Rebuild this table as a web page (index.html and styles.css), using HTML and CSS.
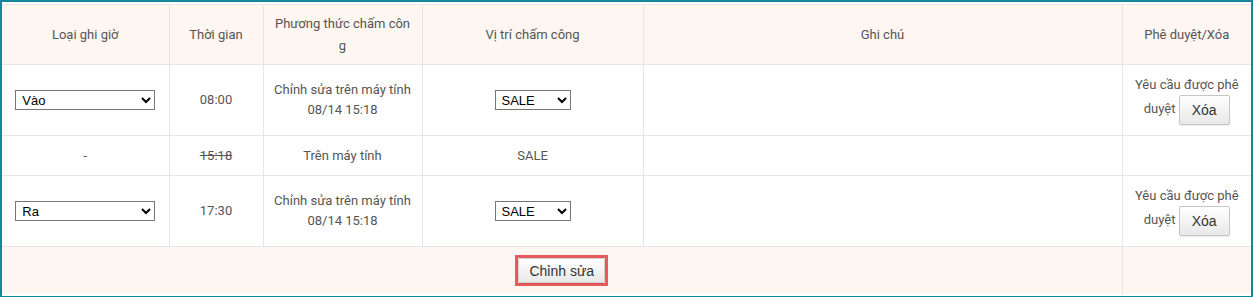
FILE: index.html
```html
<!DOCTYPE html>
<html lang="vi">
<head>
<meta charset="utf-8">
<link rel="stylesheet" href="styles.css">
</head>
<body>
<div class="frame">
  <table class="grid">
    <colgroup>
      <col class="c1"><col class="c2"><col class="c3"><col class="c4"><col class="c5"><col class="c6">
    </colgroup>
    <thead>
      <tr class="head">
        <th>Loại ghi giờ</th>
        <th>Thời gian</th>
        <th class="brk">Phương thức chấm công</th>
        <th>Vị trí chấm công</th>
        <th>Ghi chú</th>
        <th>Phê duyệt/Xóa</th>
      </tr>
    </thead>
    <tbody>
      <tr class="tall">
        <td><select class="sel sel-type"><option>Vào</option><option>Ra</option></select></td>
        <td>08:00</td>
        <td>Chỉnh sửa trên máy tính<br>08/14 15:18</td>
        <td><select class="sel sel-loc"><option>SALE</option></select></td>
        <td></td>
        <td><span class="req">Yêu cầu được phê</span> <span class="req">duyệt</span> <button class="btn btn-del">Xóa</button></td>
      </tr>
      <tr class="short">
        <td>-</td>
        <td><s>15:18</s></td>
        <td>Trên máy tính</td>
        <td>SALE</td>
        <td></td>
        <td></td>
      </tr>
      <tr class="tall">
        <td><select class="sel sel-type"><option>Ra</option><option>Vào</option></select></td>
        <td>17:30</td>
        <td>Chỉnh sửa trên máy tính<br>08/14 15:18</td>
        <td><select class="sel sel-loc"><option>SALE</option></select></td>
        <td></td>
        <td><span class="req">Yêu cầu được phê</span> <span class="req">duyệt</span> <button class="btn btn-del">Xóa</button></td>
      </tr>
    </tbody>
    <tfoot>
      <tr class="foot">
        <td colspan="5"><span class="highlight"><button class="btn btn-edit">Chỉnh sửa</button></span></td>
        <td></td>
      </tr>
    </tfoot>
  </table>
</div>
</body>
</html>
```
FILE: styles.css
```css
html, body {
  margin: 0;
  padding: 0;
  background: #ffffff;
}
.frame {
  width: 1249px;
  height: 292px;
  border: 2px solid #11899b;
  border-bottom-width: 3px;
  padding-top: 2px;
  background: #ffffff;
  overflow: hidden;
}
.grid {
  width: 1249px;
  table-layout: fixed;
  border-collapse: collapse;
  font-family: Roboto, "Liberation Sans", sans-serif;
  font-size: 13px;
  color: #555555;
  line-height: 20px;
}
.c1 { width: 167px; }
.c2 { width: 94px; }
.c3 { width: 159px; }
.c4 { width: 221px; }
.c5 { width: 479px; }
.c6 { width: 129px; }
.grid th, .grid td {
  border: 1px solid #e6e6e6;
  text-align: center;
  vertical-align: middle;
  padding: 0 8px;
}
.grid tr > :first-child { border-left: none; }
.grid tr > :last-child { border-right: none; }
.grid tfoot td { border-bottom: none; }
.grid th {
  font-weight: normal;
  background: #fef6f0;
  line-height: 22px;
}
.brk { word-break: break-all; }
.head th { height: 59px; }
.tall td { height: 70px; }
.short td { height: 39px; }
.foot td { height: 47px; background: #fef6f0; }
s { text-decoration: line-through; }
.sel {
  font-family: "Liberation Sans", Arial, sans-serif;
  font-size: 13px;
  color: #000;
  height: 20px;
  border: 1px solid #767676;
  border-radius: 0;
  background: #fff;
  padding: 0 2px;
  vertical-align: middle;
}
.sel-type { width: 140px; }
.sel-loc { width: 76px; }
.btn {
  font-family: "Liberation Sans", Arial, sans-serif;
  font-size: 14px;
  color: #333333;
  background: linear-gradient(#ffffff, #e8e8e8);
  border: 1px solid #c6c6c6;
  border-radius: 2px;
  box-shadow: 0 1px 1px rgba(0,0,0,0.08);
  cursor: pointer;
  vertical-align: middle;
}
.btn-del {
  height: 30px;
  width: 51px;
  padding: 0;
}
.highlight {
  display: inline-block;
  border: 3px solid #e85a5c;
  line-height: 0;
  vertical-align: middle;
}
.btn-edit {
  height: 25px;
  width: 87px;
  padding: 0;
  border-color: #d0d0d0;
}
```
